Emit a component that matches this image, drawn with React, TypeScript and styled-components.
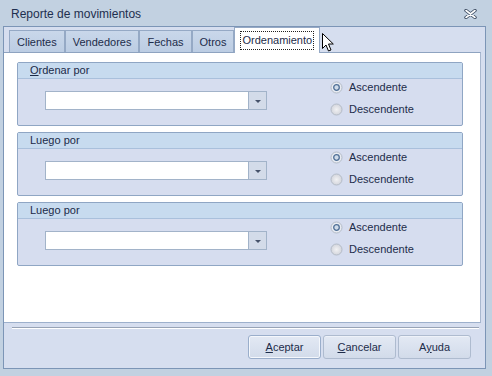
import React from "react";
import styled, { createGlobalStyle } from "styled-components";

const Global = createGlobalStyle`
  html, body { margin: 0; padding: 0; background: #c2d1e1; }
  body { font-family: "Liberation Sans", Arial, sans-serif; }
  * { box-sizing: border-box; }
`;

const Window = styled.div`
  position: relative;
  width: 492px;
  height: 376px;
  display: flex;
  flex-direction: column;
  background: #c2d1e1;
  font-family: "Liberation Sans", Arial, sans-serif;
  font-size: 11px;
  color: #1d2c4a;
  overflow: hidden;
`;

const TitleBar = styled.div`
  height: 26px;
  flex: none;
  display: flex;
  align-items: center;
  justify-content: space-between;
  padding: 2px 15px 0 11px;
  font-size: 12px;
  color: #1e2f4f;
`;

const Client = styled.div`
  flex: 1;
  margin: 0 6px 7px 3px;
  border: 1px solid #7c95b6;
  background: #d6deef;
  display: flex;
  flex-direction: column;
`;

const TabStrip = styled.div`
  height: 25px;
  flex: none;
  display: flex;
  align-items: flex-end;
  padding-left: 5px;
  position: relative;
  z-index: 1;
`;

const Tab = styled.div<{ $active?: boolean }>`
  display: flex;
  align-items: center;
  justify-content: center;
  height: ${(p) => (p.$active ? "26px" : "22px")};
  margin-bottom: ${(p) => (p.$active ? "-1px" : "0")};
  padding: ${(p) => (p.$active ? "0 5px" : "0 7px")};
  border: 1px solid #95a9c5;
  border-bottom: none;
  border-left-width: ${(p) => (p.$active ? "1px" : "1px")};
  background: ${(p) =>
    p.$active ? "#ffffff" : "linear-gradient(#c9d7ea, #bccde3)"};
  white-space: nowrap;
  color: #1d2c4a;
`;

const Focus = styled.span`
  border: 1px dotted #222;
  padding: 2px 1px 3px;
  line-height: 12px;
`;

const Panel = styled.div`
  flex: none;
  height: 271px;
  margin-right: 4px;
  background: #ffffff;
  border-top: 1px solid #8ea3c0;
  border-right: 1px solid #a9b8cf;
  border-bottom: 1px solid #9db0cc;
  padding: 9px 17px 0 13px;
  display: flex;
  flex-direction: column;
  gap: 6px;
`;

const Group = styled.div`
  height: 64px;
  border: 1px solid #8fa6c4;
  border-radius: 2px;
  background: #d6ddef;
  display: flex;
  flex-direction: column;
`;

const GroupHeader = styled.div`
  height: 16px;
  line-height: 15px;
  padding-left: 12px;
  background: #c7dbef;
  border-bottom: 1px solid #a9c0dc;
  color: #1b2a48;
`;

const GroupBody = styled.div`
  display: flex;
  padding-left: 27px;
`;

const Combo = styled.div`
  margin-top: 12px;
  width: 222px;
  height: 19px;
  display: flex;
`;

const ComboInput = styled.div`
  flex: 1;
  background: #ffffff;
  border: 1px solid #a2b3c9;
`;

const ComboButton = styled.div`
  width: 18px;
  border: 1px solid #a2b3c9;
  border-left: none;
  background: #d3dbe9;
  display: flex;
  align-items: center;
  justify-content: center;
  &::after {
    content: "";
    border-left: 3px solid transparent;
    border-right: 3px solid transparent;
    border-top: 3px solid #46526a;
    margin-top: 1px;
  }
`;

const RadioCol = styled.div`
  margin-left: 63px;
  display: flex;
  flex-direction: column;
  gap: 6px;
`;

const RadioRow = styled.div`
  height: 16px;
  display: flex;
  align-items: center;
  gap: 6px;
  color: #1d2c4a;
`;

const Bottom = styled.div`
  flex: 1;
  display: flex;
  flex-direction: column;
`;

const Separator = styled.div`
  margin: 4px 6px 0 8px;
  height: 2px;
  border-top: 1px solid #97a3b6;
  border-bottom: 1px solid #ffffff;
`;

const ButtonRow = styled.div`
  display: flex;
  justify-content: flex-end;
  gap: 2px;
  padding: 6px 14px 0 0;
`;

const Button = styled.div<{ $default?: boolean }>`
  width: 73px;
  height: 24px;
  display: flex;
  align-items: center;
  justify-content: center;
  border: 1px solid ${(p) => (p.$default ? "#9aaecb" : "#aebbcf")};
  border-radius: 3px;
  background: linear-gradient(#e3e9f4, #d2dbea);
  box-shadow: ${(p) => (p.$default ? "inset 0 0 0 1px #f4f7fc" : "inset 0 1px 0 #eef2f9")};
  color: #1d2c4a;
  & u { text-decoration: underline; }
`;

const Cursor = styled.svg`
  position: absolute;
  left: 322px;
  top: 33px;
`;

const Radio = ({ checked }: { checked?: boolean }) => (
  <svg width="13" height="13" viewBox="0 0 13 13">
    <defs>
      <radialGradient id={checked ? "rg1" : "rg0"} cx="0.5" cy="0.5" r="0.5">
        <stop offset="0" stopColor={checked ? "#f4f6fa" : "#f2f2f4"} />
        <stop offset="1" stopColor={checked ? "#e4e8ef" : "#d3d5dc"} />
      </radialGradient>
    </defs>
    <circle cx="6.5" cy="6.5" r="5.5" fill={`url(#${checked ? "rg1" : "rg0"})`} stroke="#b4bcc8" />
    {checked && <circle cx="6.5" cy="6.5" r="2.8" fill="#cfdbe9" stroke="#4f6f96" strokeWidth="1.3" />}
  </svg>
);

const CloseIcon = () => (
  <svg width="13" height="10" viewBox="0 0 13 10">
    <path d="M2 1.5 L11 8.5 M11 1.5 L2 8.5" stroke="#3a4a60" strokeWidth="3.4" strokeLinecap="round" />
    <path d="M2 1.5 L11 8.5 M11 1.5 L2 8.5" stroke="#ffffff" strokeWidth="1.6" strokeLinecap="round" />
  </svg>
);

const groups = [
  { title: <><u>O</u>rdenar por</> },
  { title: <>Luego por</> },
  { title: <>Luego por</> },
];

export default function App() {
  return (
    <>
      <Global />
      <Window>
        <TitleBar>
          <span>Reporte de movimientos</span>
          <CloseIcon />
        </TitleBar>
        <Client>
          <TabStrip>
            <Tab>Clientes</Tab>
            <Tab>Vendedores</Tab>
            <Tab>Fechas</Tab>
            <Tab>Otros</Tab>
            <Tab $active>
              <Focus>Ordenamiento</Focus>
            </Tab>
          </TabStrip>
          <Panel>
            {groups.map((g, i) => (
              <Group key={i}>
                <GroupHeader>{g.title}</GroupHeader>
                <GroupBody>
                  <Combo>
                    <ComboInput />
                    <ComboButton />
                  </Combo>
                  <RadioCol>
                    <RadioRow>
                      <Radio checked />
                      Ascendente
                    </RadioRow>
                    <RadioRow>
                      <Radio />
                      Descendente
                    </RadioRow>
                  </RadioCol>
                </GroupBody>
              </Group>
            ))}
          </Panel>
          <Bottom>
            <Separator />
            <ButtonRow>
              <Button $default>
                <span><u>A</u>ceptar</span>
              </Button>
              <Button>
                <span><u>C</u>ancelar</span>
              </Button>
              <Button>
                <span>A<u>y</u>uda</span>
              </Button>
            </ButtonRow>
          </Bottom>
        </Client>
        <Cursor width="12" height="19" viewBox="0 0 12 19">
          <path d="M0.5 0.5 L0.5 15.5 L4 12 L6.5 18 L9 17 L6.5 11 L11.3 11 Z" fill="#ffffff" stroke="#000000" strokeWidth="1" strokeLinejoin="miter" />
        </Cursor>
      </Window>
    </>
  );
}
